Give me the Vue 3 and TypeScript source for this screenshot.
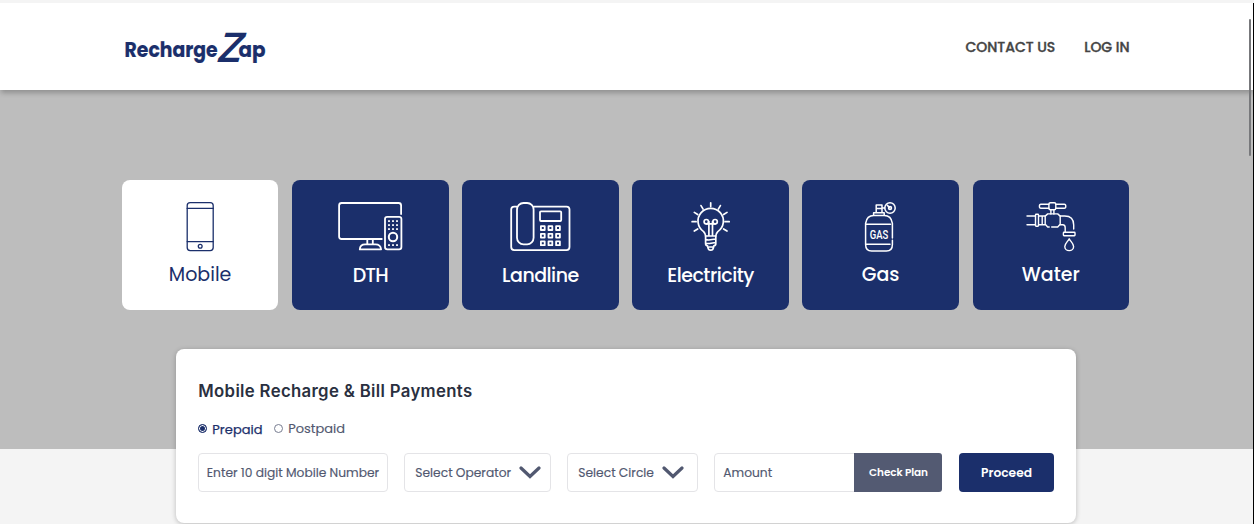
<script setup lang="ts">
import { ref } from 'vue'

type Service = { id: string; label: string; view: string }

const services: Service[] = [
  { id: 'mobile', label: 'Mobile', view: '160.3 200 80 54' },
  { id: 'dth', label: 'DTH', view: '330.2 200 80 54' },
  { id: 'landline', label: 'Landline', view: '500.3 200 80 54' },
  { id: 'electricity', label: 'Electricity', view: '670.7 200 80 54' },
  { id: 'gas', label: 'Gas', view: '841 200 80 54' },
  { id: 'water', label: 'Water', view: '1010.8 200 80 54' },
]
const active = ref('mobile')
const plan = ref('prepaid')
const cols = [0, 1, 2]
</script>

<template>
  <div class="page">
    <header class="header">
      <svg class="logo" viewBox="0 0 150 44" aria-label="RechargeZap">
        <text class="word" x="3.600" y="30.300" textLength="93" lengthAdjust="spacingAndGlyphs">Recharge</text>
        <text class="zed" transform="translate(94 35) skewX(-16)" textLength="25.500" lengthAdjust="spacingAndGlyphs">Z</text>
        <text class="word" x="117.500" y="30.300" textLength="27" lengthAdjust="spacingAndGlyphs">ap</text>
      </svg>
      <nav class="nav">
        <a class="contact">CONTACT US</a>
        <a class="login">LOG IN</a>
      </nav>
    </header>

    <section class="hero">
      <div class="tiles">
        <button
          v-for="s in services"
          :key="s.id"
          :class="['tile', s.id, { active: active === s.id }]"
          @click="active = s.id"
        >
          <svg class="icon" :viewBox="s.view">
            <g v-if="s.id === 'mobile'" stroke-width="1.3">
              <rect x="187.5" y="202.6" width="26" height="48" rx="3" />
              <path d="M187.5 208.4h26M187.5 241.6h26" />
              <circle cx="200.5" cy="246.3" r="1.9" />
            </g>
            <g v-else-if="s.id === 'dth'" stroke-width="1.8">
              <path d="M401.3 214v-8.500q0-2.500-2.500-2.500h-57q-2.500 0-2.500 2.500v31q0 2.500 2.500 2.500h40.200M367.500 239.500v4.500M373 239.500v4.500M360 249.400q.3-5 5.300-5h10.400q5 0 5.600 5z" />
              <rect x="385.200" y="216.800" width="16.400" height="32.600" rx="2.300" />
              <circle cx="393.200" cy="237" r="4.200" stroke-width="2" />
              <g class="solid">
                <template v-for="c in cols" :key="c">
                  <rect v-for="y in [220.2, 224.2, 228.2, 244.2]" :key="y" :x="388.3 + c * 4" :y="y" width="1.8" height="1.8" />
                </template>
              </g>
            </g>
            <g v-else-if="s.id === 'landline'" stroke-width="1.8">
              <path d="M517 206.600h-2.500q-3 0-3 3v37.500q0 3 3 3h52.300q3 0 3-3v-37.500q0-3-3-3h-32.600" />
              <rect x="517.300" y="203" width="16.600" height="41.300" rx="6.500" />
              <rect x="540.300" y="211.300" width="21.200" height="9.700" rx="1" />
              <template v-for="c in cols" :key="c">
                <rect v-for="r in cols" :key="r" :x="541.2 + c * 7.6" :y="226.2 + r * 7.6" width="3.8" height="3.8" />
              </template>
            </g>
            <g v-else-if="s.id === 'electricity'" stroke-width="1.7">
              <path d="M705.300 236q0-2.300-2-4.400a12.700 12.700 0 1 1 14.200 0q-2 2.100-2 4.400z" />
              <path d="M705.300 236v7.500q0 2.300 2 2.300 .4 4.400 3.100 4.400t3.100-4.400q2 0 2-2.300v-7.500M705.300 239.700l3 .3 7-1M705.300 243.300l4 .2 6-1M709 247h4" />
              <circle cx="706" cy="221.700" r="2.200" /><circle cx="714.800" cy="221.700" r="2.200" />
              <path d="M706 223.900h8.800M708.600 221.700v13.500M712.200 221.700v13.500" />
              <path d="M710.400 202.800v3.800M691.800 221.700h4M724.700 221.700h4.200M700.700 205.600l2.100 3.500M720.100 205.600l-2.100 3.500M694 212.400l3.400 2.100M726.700 212.400l-3.400 2.100M694 231l3.400-2M726.700 231l-3.400-2" />
            </g>
            <g v-else-if="s.id === 'gas'" stroke-width="1.500">
              <path d="M892.400 238v-14.700q-1.200-7.800-8.200-7.800h-10.400q-7 0-8.200 7.800v21.200q0 6.500 6 6.500h14.800q6 0 6-6.500v-4.200M866 224.300h24.500M866 244.300h24" />
              <path d="M873.600 215.300v-2.600h10.600v2.600M876.200 212.500v-7.500h5.800v7.500M876.500 208.600h5M882 208h2.700" />
              <circle cx="890" cy="208" r="5.200" /><circle cx="890" cy="208" r="1.500" /><path d="M890 208l-2.600-2.600" />
              <text class="gas-text" x="869.800" y="238.700" textLength="18.500" lengthAdjust="spacingAndGlyphs">GAS</text>
            </g>
            <g v-else stroke-width="1.400">
              <path d="M1048.700 204.300h-8q-1.500 0-1.500 2t1.500 2h8M1055.600 204.300h8.500q1.500 0 1.500 2t-1.500 2h-8.500M1050.700 210v4M1053.700 210v4" />
              <rect x="1048.700" y="202.800" width="6.900" height="7" rx="1.500" />
              <path d="M1049 227h-1.500l-2.500-2.700v-8.200l2.500-2.200h10l2.500 2.200v8.200l-2.500 2.700h-6" />
              <path d="M1026.800 216h8.500M1026.800 224.700h8.500M1038.500 216h6M1038.500 224.700h6M1042 216v8.700" />
              <rect x="1035.300" y="214.300" width="3" height="12" rx=".7" />
              <path d="M1060 216h4.500q9 0 9 9v4M1060 224.700h2.500q2.500 0 2.500 3v4" />
              <rect x="1063.200" y="232.300" width="11.600" height="3.400" rx=".6" />
              <path d="M1069 238.800c-1.500 2.800-4.400 4.800-4.400 7.600a4.400 4.200 0 0 0 8.800 0c0-2.800-2.900-4.800-4.400-7.600z" />
            </g>
          </svg>
          <span class="label">{{ s.label }}</span>
        </button>
      </div>
    </section>

    <main class="panel">
      <h1>Mobile Recharge &amp; Bill Payments</h1>
      <div class="radios">
        <label :class="['pre', { on: plan === 'prepaid' }]" @click="plan = 'prepaid'"><i class="dot"></i><span>Prepaid</span></label>
        <label :class="['post', { on: plan === 'postpaid' }]" @click="plan = 'postpaid'"><i class="dot"></i><span>Postpaid</span></label>
      </div>
      <div class="fields">
        <div class="field number"><span>Enter 10 digit Mobile Number</span></div>
        <div class="field operator">
          <span>Select Operator</span>
          <svg class="chev" viewBox="0 0 22 13"><path d="M2 2l9 8.500L20 2" /></svg>
        </div>
        <div class="field circle">
          <span>Select Circle</span>
          <svg class="chev" viewBox="0 0 22 13"><path d="M2 2l9 8.500L20 2" /></svg>
        </div>
        <div class="field amount">
          <span>Amount</span>
          <button class="check"><b>Check Plan</b></button>
        </div>
        <button class="proceed"><b>Proceed</b></button>
      </div>
    </main>
    <div class="scrollbar"></div>
    <div class="edge"></div>
  </div>
</template>

<style>
body { background: #f4f4f4; overflow: hidden; }
</style>

<style scoped>
.page {
  position: relative;
  height: 524px;
  overflow: hidden;
  padding-top: 3px;
  box-sizing: border-box;
  background: #f4f4f4;
  font-family: Poppins, Inter, "Open Sans", sans-serif;
}
button { font: inherit; border: 0; padding: 0; margin: 0; cursor: pointer; }
span, b, a { white-space: nowrap; }
.header {
  position: relative;
  height: 87px;
  box-sizing: border-box;
  background: #fff;
  box-shadow: 0 4px 5px -1px rgba(0, 0, 0, .24);
  display: flex;
  justify-content: space-between;
  padding: 24px 124.500px 0 121px;
}
.logo { width: 150px; height: 44px; fill: #1b2f6b; overflow: visible; }
.word { font: 700 20.500px Poppins, Lato, sans-serif; stroke: #1b2f6b; stroke-width: .2px; }
.zed { font: 500 42px Poppins, Lato, sans-serif; }
.nav { display: flex; gap: 29px; height: 40px; align-items: center; color: #444; font-size: 14px; font-weight: 500; letter-spacing: -.03px; -webkit-text-stroke: .35px #444; }
.hero { height: 359px; box-sizing: border-box; background: #bdbdbd; padding: 89.500px 0 0 121.800px; }
.tiles { display: grid; grid-template-columns: repeat(6, 156.600px); gap: 13.550px; }
.tile {
  height: 130.500px;
  border-radius: 8px;
  background: #1b2f6b;
  color: #fff;
  display: flex;
  flex-direction: column;
  align-items: center;
  padding-top: 20.500px;
  box-sizing: border-box;
  font-size: 19px;
  font-weight: 500;
}
.tile.active { background: #fff; color: #1b2f6b; font-weight: 400; }
.icon { width: 80px; height: 54px; flex: none; fill: none; stroke: currentColor; stroke-linecap: round; stroke-linejoin: round; }
.solid { fill: currentColor; stroke: none; }
.gas-text { font: 500 12px Roboto, sans-serif; fill: currentColor; stroke: none; }
.label { line-height: 24px; margin-top: 9px; }
.dth .label, .landline .label, .electricity .label { margin-top: 10px; letter-spacing: -.5px; }
.dth .label { letter-spacing: -.9px; }
.panel {
  position: relative;
  width: 900.500px;
  height: 174px;
  box-sizing: border-box;
  margin: -100.500px 0 0 175.800px;
  padding: 29px 0 0 22px;
  border-radius: 8px;
  background: #fff;
  box-shadow: 0 1px 5px rgba(0, 0, 0, .24);
}
h1 { margin: 0 0 0 .5px; height: 26px; font: 600 16.750px/26px Inter, sans-serif; letter-spacing: .33px; color: #2a3040; white-space: nowrap; }
.radios { display: flex; height: 20px; margin-top: 15px; gap: 11px; font-size: 13px; color: #515870; }
.radios label { display: flex; align-items: center; gap: 5px; }
.pre span { padding-top: 2px; }
.post span { -webkit-text-stroke: .15px #515870; }
.dot { box-sizing: border-box; width: 9.500px; height: 9.500px; border: 1px solid #777d91; border-radius: 50%; }
.on { color: #1b2f6b; letter-spacing: .05px; -webkit-text-stroke: .25px #1b2f6b; }
.on .dot { border-color: #1b2f6b; background: #1b2f6b; box-shadow: inset 0 0 0 1px #fff; }
.fields { display: flex; margin-top: 14px; gap: 16px; font-size: 12.250px; color: #515870; }
.field { height: 39.500px; box-sizing: border-box; border: 1px solid #e4e4e7; border-radius: 4px; display: flex; align-items: center; padding-left: 8px; }
.field > span { padding-top: 1px; -webkit-text-stroke: .15px #515870; }
.number { width: 190.500px; }
.operator { width: 147px; padding-left: 10px; justify-content: space-between; padding-right: 9px; }
.circle { width: 131px; padding-left: 10px; justify-content: space-between; padding-right: 13px; }
.chev { width: 22px; height: 13px; fill: none; stroke: #515870; stroke-width: 3.200px; stroke-linecap: round; flex: none; }
.amount { width: 228.200px; justify-content: space-between; }
.check { width: 88px; height: 39.500px; margin-right: -1px; background: #535a72; color: #fff; border-radius: 0 3px 3px 0; font-size: 10.500px; letter-spacing: -.1px; padding-top: 1px; flex: none; }
.check b, .proceed b { font-weight: 600; }
.proceed { width: 95.500px; height: 39.500px; margin-left: .3px; background: #1b2f6b; color: #fff; border-radius: 4px; padding-top: 1px; }
.scrollbar { position: absolute; left: 1249px; top: 19px; width: 2px; height: 137px; background: #77787b; border-radius: 1px; }
.edge { position: absolute; right: 0; top: 3px; width: 1px; height: 521px; background: #000; }
</style>
